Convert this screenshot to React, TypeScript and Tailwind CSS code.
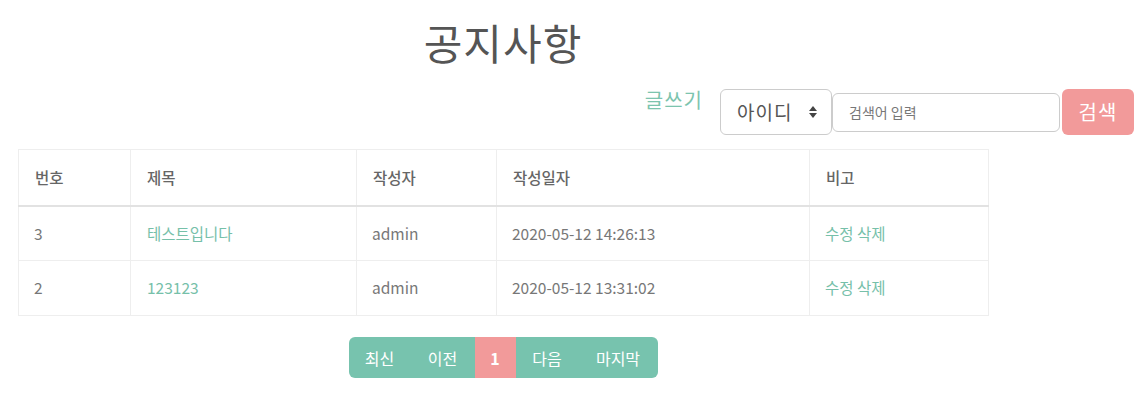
import React from 'react';

const ROWS = [
  { no: 3, title: '테스트입니다', writer: 'admin', date: '2020-05-12 14:26:13' },
  { no: 2, title: '123123', writer: 'admin', date: '2020-05-12 13:31:02' },
];

const PAGES = [
  { label: '최신', w: 'w-[62px]', active: false },
  { label: '이전', w: 'w-[64px]', active: false },
  { label: '1', w: 'w-[41px]', active: true },
  { label: '다음', w: 'w-[63px]', active: false },
  { label: '마지막', w: 'w-[79px]', active: false },
];

export default function App() {
  return (
    <div className="w-[1141px] h-[402px] bg-white overflow-hidden font-['Noto_Sans_CJK_KR','Noto_Sans',sans-serif]">
      {/* Title */}
      <div className="w-[970px] ml-[18px] h-[84px] flex items-center justify-center">
        <h1 className="text-[42px] leading-none text-[#555] tracking-[1px] font-normal">공지사항</h1>
      </div>

      {/* Write + search */}
      <div className="flex justify-end items-center pr-[7px] h-[50px] mt-[3px]">
        <a className="text-[20px] leading-none text-[#7cc4ae] self-start mt-[3px] mr-[17px] tracking-[1px]">글쓰기</a>
        <div className="w-[112px] h-[46px] border border-[#ccc] rounded-[6px] flex items-center justify-between pl-[16px] pr-[14px]">
          <span className="text-[19px] text-[#555] tracking-[1px]">아이디</span>
          <svg width="8" height="12" viewBox="0 0 8 12" className="ml-1">
            <path d="M4 0 L8 5 H0 Z" fill="#444" />
            <path d="M4 12 L8 7 H0 Z" fill="#444" />
          </svg>
        </div>
        <input
          className="w-[228px] h-[39px] border border-[#ccc] rounded-[6px] pl-[16px] text-[14px] text-[#555] placeholder:text-[#777] outline-none"
          placeholder="검색어 입력"
        />
        <button className="ml-[2px] w-[72px] h-[46px] rounded-[6px] bg-[#f29a9a] text-white text-[20px] tracking-[1px]">
          검색
        </button>
      </div>

      {/* Table */}
      <div className="ml-[18px] mt-[12px] w-[970px]">
        <table className="w-[970px] border-collapse table-fixed text-[15.5px]">
          <colgroup>
            <col className="w-[112px]" />
            <col className="w-[226px]" />
            <col className="w-[140px]" />
            <col className="w-[313px]" />
            <col className="w-[179px]" />
          </colgroup>
          <thead>
            <tr className="h-[56px]">
              {['번호', '제목', '작성자', '작성일자', '비고'].map((h) => (
                <th key={h} className="border border-[#eee] border-b-2 border-b-[#e2e2e2] text-left pl-[16px] font-medium text-[#666]">
                  {h}
                </th>
              ))}
            </tr>
          </thead>
          <tbody>
            {ROWS.map((r) => (
              <tr key={r.no} className="h-[55px]">
                <td className="border border-[#eee] pl-[15px] text-[#777]">{r.no}</td>
                <td className="border border-[#eee] pl-[16px] text-[#76c0a9]">{r.title}</td>
                <td className="border border-[#eee] pl-[15px] text-[#777]">{r.writer}</td>
                <td className="border border-[#eee] pl-[15px] text-[#777]">{r.date}</td>
                <td className="border border-[#eee] pl-[15px] text-[#76c0a9]">수정 삭제</td>
              </tr>
            ))}
          </tbody>
        </table>
      </div>

      {/* Pagination */}
      <div className="w-[970px] ml-[18px] mt-[21px] flex justify-center">
        <div className="flex h-[41px] rounded-[6px] overflow-hidden bg-[#77c3ae]">
          {PAGES.map((p) => (
            <div
              key={p.label}
              className={`${p.w} flex items-center justify-center text-[16px] text-white ${p.active ? 'bg-[#f29a9a] font-bold text-[14px]' : ''}`}
            >
              {p.label}
            </div>
          ))}
        </div>
      </div>
    </div>
  );
}
